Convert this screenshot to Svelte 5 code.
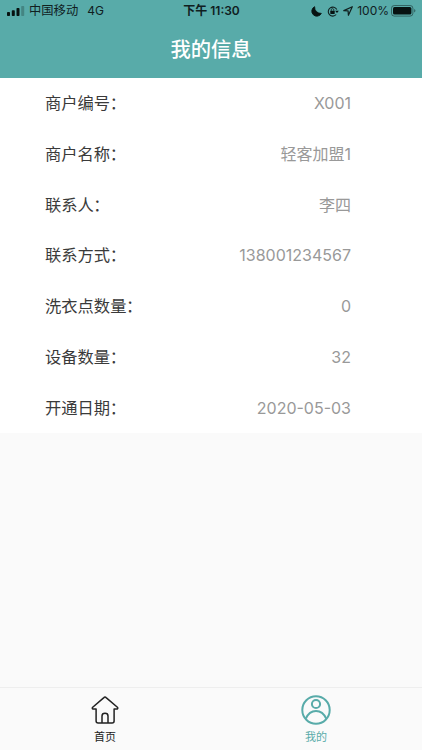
<script lang="ts">
	const rows = [
		{ label: '商户编号', value: 'X001' },
		{ label: '商户名称', value: '轻客加盟1' },
		{ label: '联系人', value: '李四' },
		{ label: '联系方式', value: '138001234567' },
		{ label: '洗衣点数量', value: '0' },
		{ label: '设备数量', value: '32' },
		{ label: '开通日期', value: '2020-05-03' }
	];
	let tab = 'mine';
</script>

<div class="page">
	<header>
		<div class="status">
			<div class="left">
				<svg width="18" height="10" viewBox="0 0 18 10">
					<rect x="0" y="6" width="3" height="4" rx="0.8" />
					<rect x="4.8" y="4.2" width="3" height="5.8" rx="0.8" />
					<rect x="9.5" y="2" width="3" height="8" rx="0.8" />
					<rect x="14.2" y="0" width="3" height="10" rx="0.8" opacity="0.25" />
				</svg>
				<span class="carrier">中国移动</span>
				<span class="net">4G</span>
			</div>
			<div class="time">下午 11:30</div>
			<div class="right">
				<svg class="moon" width="11" height="11" viewBox="0 0 11 11">
					<path d="M3.6 0.7A5 5 0 1 0 10.3 7.4A6.2 6.2 0 0 1 3.6 0.7Z" stroke="#071211" stroke-width="0.9" />
				</svg>
				<svg class="lock" width="12" height="11" viewBox="0 0 12 11">
					<path d="M9.8 3.6A4.5 4.5 0 1 0 9.2 8.5" fill="none" stroke="#10201f" stroke-width="1.1" />
					<path d="M8.1 4.7h3.7L10 7.1z" />
					<rect x="3.3" y="4.8" width="4.4" height="3.2" rx="0.4" />
					<path d="M4.2 5V3.9a1.3 1.3 0 0 1 2.6 0v1" fill="none" stroke="#10201f" stroke-width="0.8" />
				</svg>
				<svg class="arrow" width="10" height="10" viewBox="0 0 10 10">
					<path d="M0.8 4.6L9.3 0.7L5.4 9.3L5.1 4.9Z" fill="none" stroke="#10201f" stroke-width="1.2" stroke-linejoin="round" />
				</svg>
				<span class="percent">100%</span>
				<svg width="25" height="12" viewBox="0 0 25 12">
					<rect x="0.5" y="0.5" width="21.4" height="10.6" rx="2.8" fill="none" stroke="#10201f" stroke-opacity="0.5" />
					<rect x="2" y="2" width="18.4" height="7.6" rx="1.5" />
					<path d="M23.2 4v3.6q1.2-.5 1.2-1.8T23.2 4z" opacity="0.5" />
				</svg>
			</div>
		</div>
		<h1>我的信息</h1>
	</header>

	<main>
		{#each rows as row}
			<div class="row">
				<span class="label">{row.label}<span class="colon">：</span></span>
				<span class="value">{row.value}</span>
			</div>
		{/each}
	</main>

	<nav>
		<button class:active={tab === 'home'} on:click={() => (tab = 'home')}>
			<svg width="30" height="30" viewBox="0 0 30 30">
				<path
					d="M15 2.1Q15.6 2.1 16.1 2.6L27.4 12.3Q28.3 13.3 27.2 14H24.1V26.1Q24.1 28.1 22.1 28.1H18V20.9Q18 18.2 15 18.2T12 20.9V28.1H8.1Q6.1 28.1 6.1 26.1V14H3Q1.7 13.4 2.7 12.3L13.9 2.6Q14.4 2.1 15 2.1ZM12 28.1h6"
				/>
			</svg>
			<span>首页</span>
		</button>
		<button class:active={tab === 'mine'} on:click={() => (tab = 'mine')}>
			<svg class="user" width="30" height="30" viewBox="0 0 30 30">
				<circle cx="15" cy="15" r="13.7" />
				<circle cx="15" cy="9" r="4.1" />
				<path d="M4.8 23.7C7 18.6 10.6 16 15 16S23 18.6 25.2 23.7" />
			</svg>
			<span>我的</span>
		</button>
	</nav>
</div>

<style>
	:global(body) {
		margin: 0;
	}
	.page {
		display: flex;
		flex-direction: column;
		height: 750px;
		background: #fafafa;
		font-family: Inter, 'Noto Sans CJK SC', sans-serif;
	}
	header {
		height: 78px;
		background: #58aba9;
		color: #fff;
	}
	.status {
		display: grid;
		grid-template-columns: 1fr auto 1fr;
		align-items: center;
		height: 22px;
		padding: 0 6px 0 7px;
		font-size: 12px;
		line-height: 22px;
		color: #10201f;
		fill: #071211;
	}
	.left,
	.right {
		display: flex;
		align-items: center;
	}
	.right {
		justify-content: flex-end;
	}
	.carrier {
		margin-left: 4px;
		font-size: 12.3px;
	}
	.net {
		margin-left: 9px;
	}
	.time {
		font-weight: 600;
	}
	.lock {
		margin-left: 5px;
	}
	.arrow {
		margin: 0 4px 0 4px;
	}
	.percent {
		margin-right: 2px;
	}
	h1 {
		margin: 0;
		font-size: 20.3px;
		font-weight: 500;
		line-height: 56px;
		text-align: center;
	}
	main {
		height: 355px;
		background: #fff;
	}
	.row {
		display: flex;
		justify-content: space-between;
		height: 50.75px;
		padding: 0 71px 0 45px;
		font-size: 16.3px;
		line-height: 50px;
		color: #3a3a3a;
	}
	.label {
		height: 50px;
	}
	.colon {
		margin-left: -0.5px;
	}
	.value {
		font-size: 16px;
		color: #999;
	}
	nav {
		display: flex;
		height: 62px;
		margin-top: auto;
		border-top: 1px solid #eee;
	}
	nav button {
		display: flex;
		flex: 1;
		flex-direction: column;
		align-items: center;
		padding: 7px 1px 0 0;
		border: none;
		background: none;
		font: inherit;
		font-size: 11px;
		line-height: 16px;
		color: #222;
		cursor: pointer;
	}
	nav span {
		margin-top: 4px;
	}
	nav svg {
		fill: none;
		stroke: currentColor;
		stroke-width: 1.5;
		stroke-linejoin: round;
	}
	nav .user {
		stroke-width: 2;
	}
	nav .active {
		color: #58aba9;
	}
</style>
